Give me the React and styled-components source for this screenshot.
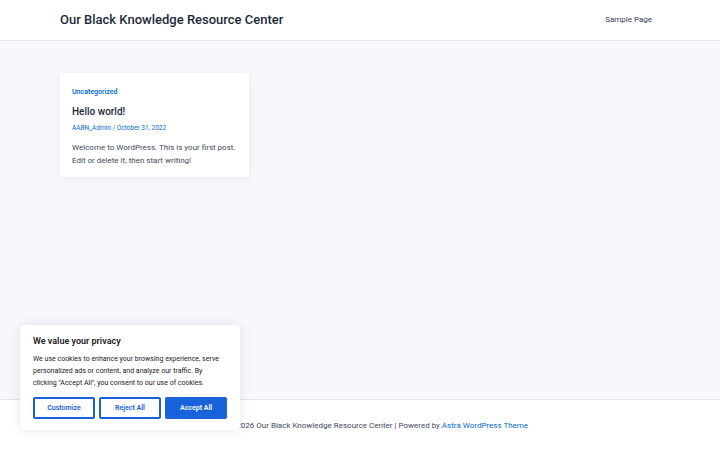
import React from 'react';
import styled, { createGlobalStyle } from 'styled-components';

const GlobalStyle = createGlobalStyle`
  html, body {
    margin: 0;
    padding: 0;
    background: #ffffff;
    font-family: Roboto, "Liberation Sans", sans-serif;
  }
  * {
    box-sizing: border-box;
  }
`;

const Page = styled.div`
  display: flex;
  flex-direction: column;
  min-height: 450px;
  position: relative;
`;

const Header = styled.header`
  height: 41px;
  background: #ffffff;
  border-bottom: 1px solid #e2e6ea;
  display: flex;
  align-items: center;
  justify-content: space-between;
  padding: 0 68px 0 60px;
`;

const SiteTitle = styled.a`
  font-size: 13px;
  font-weight: 500;
  color: #1e293b;
  text-decoration: none;
  margin-top: -2px;
`;

const NavLink = styled.a`
  font-size: 8px;
  color: #334155;
  text-decoration: none;
  margin-top: -2px;
`;

const Main = styled.main`
  flex: 1;
  background: #f6f8fb;
  padding: 32px 60px;
`;

const Card = styled.article`
  width: 189px;
  background: #ffffff;
  border-radius: 2px;
  box-shadow: 0 2px 8px rgba(30, 41, 59, 0.06);
  padding: 14px 12px 10px;
  display: flex;
  flex-direction: column;
`;

const Category = styled.a`
  font-size: 7px;
  font-weight: 600;
  color: #046bd2;
  text-decoration: none;
  line-height: 10px;
`;

const PostTitle = styled.h2`
  margin: 8px 0 0;
  font-size: 10px;
  font-weight: 500;
  color: #1e293b;
  line-height: 14px;
`;

const Meta = styled.div`
  margin-top: 4px;
  font-size: 6.5px;
  color: #046bd2;
  line-height: 10px;
`;

const Excerpt = styled.p`
  margin: 8px 0 0;
  font-size: 8px;
  line-height: 13px;
  color: #3f4a5a;
`;

const Footer = styled.footer`
  height: 51px;
  background: #ffffff;
  border-top: 1px solid #e2e6ea;
  display: flex;
  align-items: center;
  justify-content: center;
  font-size: 8px;
  color: #3f4a5a;
`;

const FooterLink = styled.a`
  color: #046bd2;
  text-decoration: none;
`;

const CookieBanner = styled.div`
  position: absolute;
  left: 20px;
  bottom: 20px;
  width: 220px;
  background: #ffffff;
  border-radius: 4px;
  box-shadow: 0 0 12px rgba(0, 0, 0, 0.1);
  padding: 10px 13px 11px;
  display: flex;
  flex-direction: column;
`;

const CookieTitle = styled.div`
  font-size: 9px;
  font-weight: 600;
  color: #212121;
  line-height: 12px;
`;

const CookieText = styled.p`
  margin: 6px 0 0;
  font-size: 7px;
  line-height: 12px;
  color: #212121;
`;

const ButtonRow = styled.div`
  display: flex;
  gap: 4px;
  margin-top: 8px;
`;

const CookieButton = styled.button`
  flex: 1;
  height: 22px;
  border: 2px solid #1863dc;
  border-radius: 2px;
  background: ${p => (p.$primary ? '#1863dc' : '#ffffff')};
  color: ${p => (p.$primary ? '#ffffff' : '#1863dc')};
  font-family: inherit;
  font-size: 7px;
  font-weight: 600;
  padding: 0;
`;

export default function App() {
  return (
    <>
      <GlobalStyle />
      <Page>
        <Header>
          <SiteTitle href="#">Our Black Knowledge Resource Center</SiteTitle>
          <NavLink href="#">Sample Page</NavLink>
        </Header>
        <Main>
          <Card>
            <Category href="#">Uncategorized</Category>
            <PostTitle>Hello world!</PostTitle>
            <Meta>AABN_Admin / October 31, 2022</Meta>
            <Excerpt>
              Welcome to WordPress. This is your first post. Edit or delete it, then start writing!
            </Excerpt>
          </Card>
        </Main>
        <Footer>
          Copyright © 2026 Our Black Knowledge Resource Center | Powered by&nbsp;
          <FooterLink href="#">Astra WordPress Theme</FooterLink>
        </Footer>
        <CookieBanner>
          <CookieTitle>We value your privacy</CookieTitle>
          <CookieText>
            We use cookies to enhance your browsing experience, serve personalized ads or content, and analyze our traffic. By clicking "Accept All", you consent to our use of cookies.
          </CookieText>
          <ButtonRow>
            <CookieButton>Customize</CookieButton>
            <CookieButton>Reject All</CookieButton>
            <CookieButton $primary>Accept All</CookieButton>
          </ButtonRow>
        </CookieBanner>
      </Page>
    </>
  );
}
